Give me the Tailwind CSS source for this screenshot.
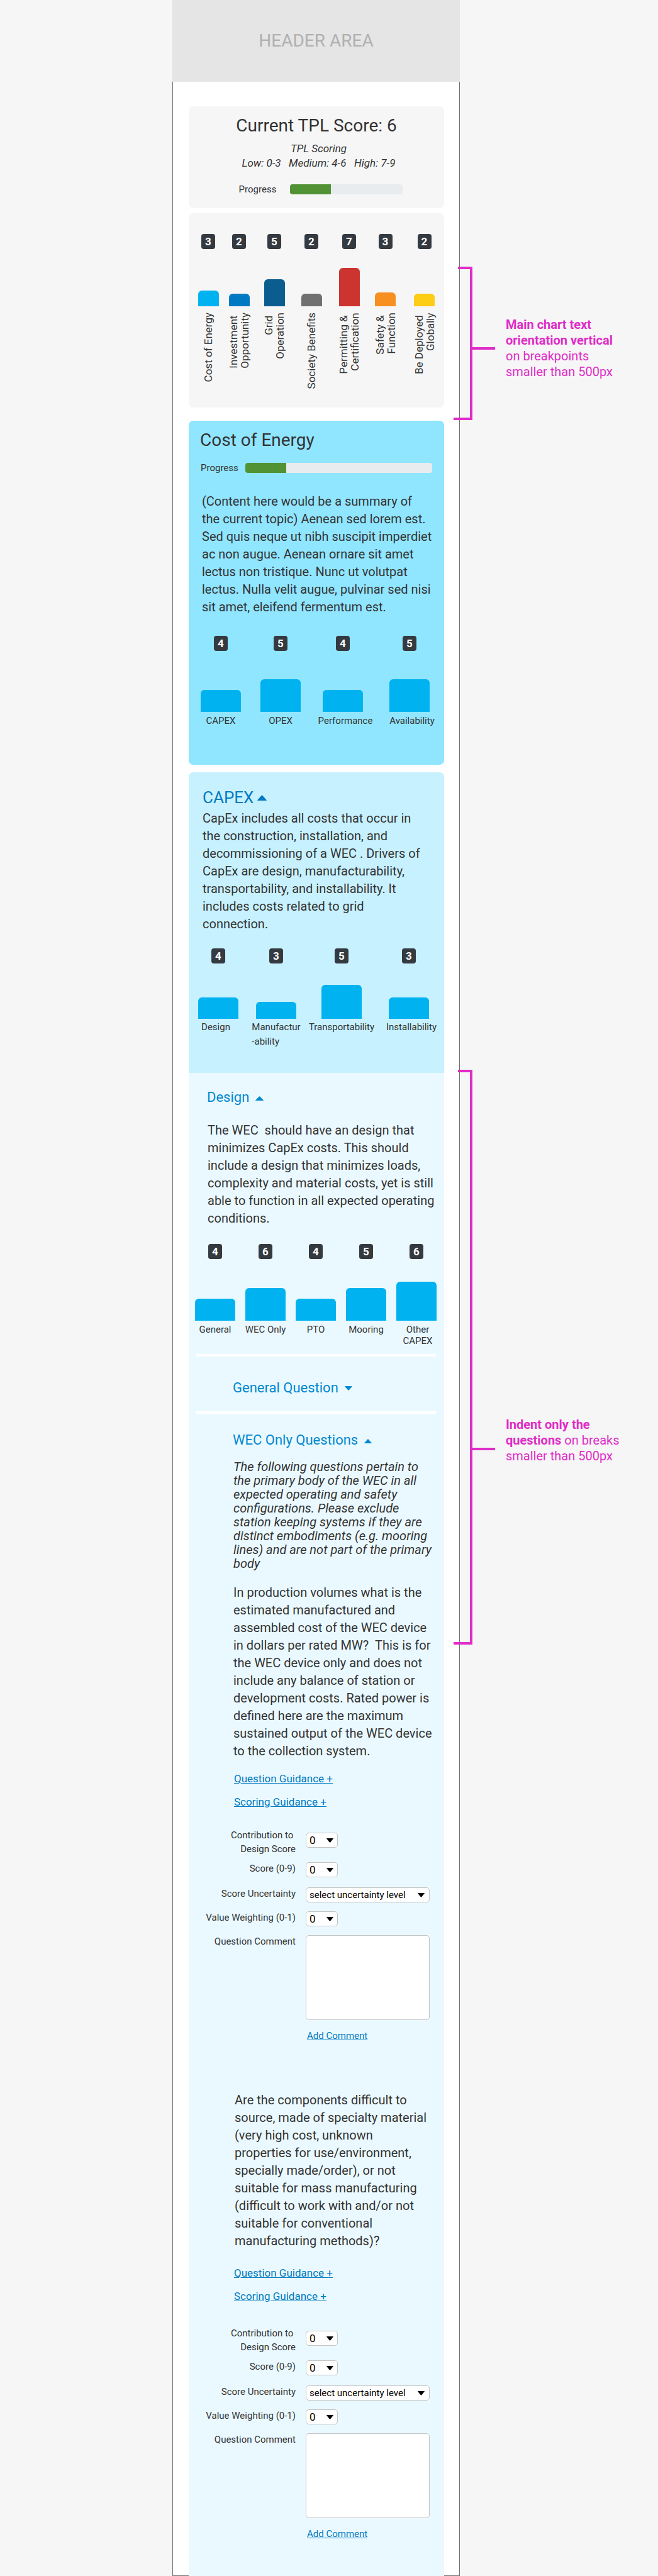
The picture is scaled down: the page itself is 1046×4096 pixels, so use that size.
<!DOCTYPE html>
<html lang="en">
<head>
<meta charset="utf-8">
<meta name="viewport" content="width=device-width, initial-scale=1">
<title>TPL Scoring</title>
<script src="https://cdn.jsdelivr.net/npm/@tailwindcss/browser@4"></script>
</head>
<body class="bg-[#f6f6f6] font-[Roboto,sans-serif] text-[#333]">
<div class="grid grid-cols-[274fr_457fr_315fr]">

  <div class="col-start-2 min-w-0">
    <header class="flex h-[130px] items-center justify-center bg-[#e5e5e5] text-[28px] leading-10 text-[#b0b0b0]">HEADER AREA</header>

    <main class="border-x border-b border-[#707070] bg-white pt-[39px] pr-6 pl-[25px]">

      <!-- Overall score -->
      <section class="rounded-[7px] bg-[#f6f6f6] pt-[13px] pb-[22px] text-center">
        <h1 class="text-[28px] leading-9">Current TPL Score: 6</h1>
        <p class="mt-[7px] pl-[7px] text-[17px] leading-[23px] italic">TPL Scoring<br>Low: 0-3 &nbsp; Medium: 4-6 &nbsp; High: 7-9</p>
        <div class="mt-[22px] flex items-center justify-center gap-[22px] pl-[14px]">
          <span id="p1" class="text-[15px] leading-4">Progress</span>
          <div role="progressbar" aria-labelledby="p1" aria-valuenow="36" class="h-4 w-[179px] overflow-hidden rounded-[4px] bg-[#e8ecef]"><div class="h-full bg-[#519334]" style="width:36%"></div></div>
        </div>
      </section>

      <!-- Main chart -->
      <section class="mt-2 grid grid-cols-[38fr_60fr_52fr_66fr_54fr_61fr_63fr] rounded-[7px] bg-[#f6f6f6] pt-[33px] pb-[30px] pl-3">
        <div class="flex flex-col items-center">
          <span class="w-[22px] rounded bg-[#343a40] text-center text-[17px] leading-6 font-bold text-white">3</span>
          <div class="flex h-[91px] items-end"><div class="w-[33px] rounded-t-md bg-[#00b3f0]" style="height:25px"></div></div>
          <span class="mt-[10px] rotate-180 text-right text-[17px] leading-[18px] whitespace-nowrap [writing-mode:vertical-rl]">Cost of Energy</span>
        </div>
        <div class="flex flex-col items-center">
          <span class="w-[22px] rounded bg-[#343a40] text-center text-[17px] leading-6 font-bold text-white">2</span>
          <div class="flex h-[91px] items-end"><div class="w-[33px] rounded-t-md bg-[#0079c2]" style="height:20px"></div></div>
          <span class="mt-[10px] rotate-180 text-right text-[17px] leading-[18px] whitespace-nowrap [writing-mode:vertical-rl]">Investment&nbsp;<br>Opportunity</span>
        </div>
        <div class="flex flex-col items-center">
          <span class="w-[22px] rounded bg-[#343a40] text-center text-[17px] leading-6 font-bold text-white">5</span>
          <div class="flex h-[91px] items-end"><div class="w-[33px] rounded-t-md bg-[#0c5d8f]" style="height:43px"></div></div>
          <span class="mt-[10px] rotate-180 text-right text-[17px] leading-[18px] whitespace-nowrap [writing-mode:vertical-rl]">Grid&nbsp;<br>Operation</span>
        </div>
        <div class="flex flex-col items-center">
          <span class="w-[22px] rounded bg-[#343a40] text-center text-[17px] leading-6 font-bold text-white">2</span>
          <div class="flex h-[91px] items-end"><div class="w-[33px] rounded-t-md bg-[#707070]" style="height:20px"></div></div>
          <span class="mt-[10px] rotate-180 text-right text-[17px] leading-[18px] whitespace-nowrap [writing-mode:vertical-rl]">Society Benefits</span>
        </div>
        <div class="flex flex-col items-center">
          <span class="w-[22px] rounded bg-[#343a40] text-center text-[17px] leading-6 font-bold text-white">7</span>
          <div class="flex h-[91px] items-end"><div class="w-[33px] rounded-t-md bg-[#cc342f]" style="height:61px"></div></div>
          <span class="mt-[10px] rotate-180 text-right text-[17px] leading-[18px] whitespace-nowrap [writing-mode:vertical-rl]">Permitting &amp;&nbsp;<br>Certification</span>
        </div>
        <div class="flex flex-col items-center">
          <span class="w-[22px] rounded bg-[#343a40] text-center text-[17px] leading-6 font-bold text-white">3</span>
          <div class="flex h-[91px] items-end"><div class="w-[33px] rounded-t-md bg-[#f79020]" style="height:22px"></div></div>
          <span class="mt-[10px] rotate-180 text-right text-[17px] leading-[18px] whitespace-nowrap [writing-mode:vertical-rl]">Safety &amp;&nbsp;<br>Function</span>
        </div>
        <div class="flex flex-col items-center">
          <span class="w-[22px] rounded bg-[#343a40] text-center text-[17px] leading-6 font-bold text-white">2</span>
          <div class="flex h-[91px] items-end"><div class="w-[33px] rounded-t-md bg-[#fdcd15]" style="height:20px"></div></div>
          <span class="mt-[10px] rotate-180 text-right text-[17px] leading-[18px] whitespace-nowrap [writing-mode:vertical-rl]">Be Deployed&nbsp;<br>Globally</span>
        </div>
      </section>

      <!-- Cost of Energy -->
      <section class="mt-[21px] rounded-[7px] bg-[#90e5ff] pt-[13px] pb-[61px]">
        <h2 class="pl-[18px] text-[28px] leading-9">Cost of Energy</h2>
        <div class="mt-[18px] flex items-center gap-[11px] px-[19px]">
          <span id="p2" class="text-[15px] leading-4">Progress</span>
          <div role="progressbar" aria-labelledby="p2" aria-valuenow="22" class="h-4 flex-1 overflow-hidden rounded-[4px] bg-[#e8ecef]"><div class="h-full bg-[#519334]" style="width:22%"></div></div>
        </div>
        <p class="mt-[31px] pl-[21px] text-[20px] leading-7">(Content here would be a summary of<br>the current topic) Aenean sed lorem est.<br>Sed quis neque ut nibh suscipit imperdiet<br>ac non augue. Aenean ornare sit amet<br>lectus non tristique. Nunc ut volutpat<br>lectus. Nulla velit augue, pulvinar sed nisi<br>sit amet, eleifend fermentum est.</p>
        <div class="mt-8 grid grid-cols-[98fr_92fr_106fr_106fr] px-0.5">
          <div class="flex flex-col items-center">
            <span class="w-[22px] rounded bg-[#343a40] text-center text-[17px] leading-6 font-bold text-white">4</span>
            <div class="flex h-[97px] items-end"><div class="w-16 rounded-t-md bg-[#00b3f0]" style="height:35px"></div></div>
            <span class="mt-[5px] text-[15px] leading-[18px]">CAPEX</span>
          </div>
          <div class="flex flex-col items-center">
            <span class="w-[22px] rounded bg-[#343a40] text-center text-[17px] leading-6 font-bold text-white">5</span>
            <div class="flex h-[97px] items-end"><div class="w-16 rounded-t-md bg-[#00b3f0]" style="height:52px"></div></div>
            <span class="mt-[5px] text-[15px] leading-[18px]">OPEX</span>
          </div>
          <div class="flex flex-col items-center">
            <span class="w-[22px] rounded bg-[#343a40] text-center text-[17px] leading-6 font-bold text-white">4</span>
            <div class="flex h-[97px] items-end"><div class="w-16 rounded-t-md bg-[#00b3f0]" style="height:35px"></div></div>
            <span class="mt-[5px] pl-2 text-[15px] leading-[18px]">Performance</span>
          </div>
          <div class="flex flex-col items-center">
            <span class="w-[22px] rounded bg-[#343a40] text-center text-[17px] leading-6 font-bold text-white">5</span>
            <div class="flex h-[97px] items-end"><div class="w-16 rounded-t-md bg-[#00b3f0]" style="height:52px"></div></div>
            <span class="mt-[5px] pl-2 text-[15px] leading-[18px]">Availability</span>
          </div>
        </div>
      </section>

      <!-- CAPEX -->
      <section class="mt-3 rounded-t-[7px] bg-[#c7f1ff] pt-6 pb-[38px]">
        <h2 class="pl-[22px] text-[26px] leading-8 text-[#007ac2]"><button type="button" aria-expanded="true" class="flex items-center gap-1.5">CAPEX
          <svg class="h-[9px] w-[15px]" viewBox="0 0 15 9" fill="currentColor" aria-hidden="true"><path d="M1 9h13q1.600 0 .6-1.100L8.200.8q-.7-.7-1.400 0L.4 7.900Q-.6 9 1 9z"/></svg></button></h2>
        <p class="mt-[3px] pl-[22px] text-[20px] leading-7">CapEx includes all costs that occur in<br>the construction, installation, and<br>decommissioning of a WEC . Drivers of<br>CapEx are design, manufacturability,<br>transportability, and installability. It<br>includes costs related to grid<br>connection.</p>
        <div class="mt-[25px] grid grid-cols-[94fr_90fr_118fr_96fr] pr-2">
          <div class="flex flex-col items-center">
            <span class="w-[22px] rounded bg-[#343a40] text-center text-[17px] leading-6 font-bold text-white">4</span>
            <div class="flex h-[88px] items-end"><div class="w-16 rounded-t-md bg-[#00b3f0]" style="height:34px"></div></div>
            <span class="mt-0.5 pr-2 text-[15px] leading-[23px]">Design</span>
          </div>
          <div class="flex flex-col items-center">
            <span class="w-[22px] rounded bg-[#343a40] text-center text-[17px] leading-6 font-bold text-white">3</span>
            <div class="flex h-[88px] items-end"><div class="w-16 rounded-t-md bg-[#00b3f0]" style="height:27px"></div></div>
            <span class="mt-0.5 text-[15px] leading-[23px]">Manufactur<br>-ability</span>
          </div>
          <div class="flex flex-col items-center">
            <span class="w-[22px] rounded bg-[#343a40] text-center text-[17px] leading-6 font-bold text-white">5</span>
            <div class="flex h-[88px] items-end"><div class="w-16 rounded-t-md bg-[#00b3f0]" style="height:54px"></div></div>
            <span class="mt-0.5 text-[15px] leading-[23px]">Transportability</span>
          </div>
          <div class="flex flex-col items-center">
            <span class="w-[22px] rounded bg-[#343a40] text-center text-[17px] leading-6 font-bold text-white">3</span>
            <div class="flex h-[88px] items-end"><div class="w-16 rounded-t-md bg-[#00b3f0]" style="height:34px"></div></div>
            <span class="mt-0.5 pl-2 text-[15px] leading-[23px]">Installability</span>
          </div>
        </div>
      </section>

      <!-- Design -->
      <section class="-mb-px bg-[#eaf9ff] pt-[25px] pb-[57px]">
        <h3 class="pl-[29px] text-[22px] leading-7 text-[#0088d0]"><button type="button" aria-expanded="true" class="flex items-center gap-[10px]">Design
          <svg class="mt-0.5 h-[7px] w-[13px]" viewBox="0 0 15 9" preserveAspectRatio="none" fill="currentColor" aria-hidden="true"><path d="M1 9h13q1.600 0 .6-1.100L8.200.8q-.7-.7-1.400 0L.4 7.900Q-.6 9 1 9z"/></svg></button></h3>
        <p class="mt-6 pl-[30px] text-[20px] leading-7">The WEC &nbsp;should have an design that<br>minimizes CapEx costs. This should<br>include a design that minimizes loads,<br>complexity and material costs, yet is still<br>able to function in all expected operating<br>conditions.</p>
        <div class="mt-[27px] grid grid-cols-5 pr-1 pl-0.5 text-center">
          <div class="flex flex-col items-center">
            <span class="w-[22px] rounded bg-[#343a40] text-[17px] leading-6 font-bold text-white">4</span>
            <div class="flex h-[98px] items-end"><div class="w-16 rounded-t-md bg-[#00b3f0]" style="height:35px"></div></div>
            <span class="mt-[5px] text-[15px] leading-[18px]">General</span>
          </div>
          <div class="flex flex-col items-center">
            <span class="w-[22px] rounded bg-[#343a40] text-[17px] leading-6 font-bold text-white">6</span>
            <div class="flex h-[98px] items-end"><div class="w-16 rounded-t-md bg-[#00b3f0]" style="height:52px"></div></div>
            <span class="mt-[5px] text-[15px] leading-[18px]">WEC Only</span>
          </div>
          <div class="flex flex-col items-center">
            <span class="w-[22px] rounded bg-[#343a40] text-[17px] leading-6 font-bold text-white">4</span>
            <div class="flex h-[98px] items-end"><div class="w-16 rounded-t-md bg-[#00b3f0]" style="height:35px"></div></div>
            <span class="mt-[5px] text-[15px] leading-[18px]">PTO</span>
          </div>
          <div class="flex flex-col items-center">
            <span class="w-[22px] rounded bg-[#343a40] text-[17px] leading-6 font-bold text-white">5</span>
            <div class="flex h-[98px] items-end"><div class="w-16 rounded-t-md bg-[#00b3f0]" style="height:52px"></div></div>
            <span class="mt-[5px] text-[15px] leading-[18px]">Mooring</span>
          </div>
          <div class="flex flex-col items-center">
            <span class="w-[22px] rounded bg-[#343a40] text-[17px] leading-6 font-bold text-white">6</span>
            <div class="flex h-[98px] items-end"><div class="w-16 rounded-t-md bg-[#00b3f0]" style="height:62px"></div></div>
            <span class="mt-[5px] pl-1 text-[15px] leading-[18px]">Other<br>CAPEX</span>
          </div>
        </div>

        <hr class="mt-3 mr-[13px] ml-[11px] h-1 border-0 bg-white">

        <h4 class="mt-9 pl-[70px] text-[22px] leading-7 text-[#0088d0]"><button type="button" aria-expanded="false" class="flex items-center gap-[10px]">General Question
          <svg class="h-[7px] w-3" viewBox="0 0 15 9" preserveAspectRatio="none" fill="currentColor" aria-hidden="true"><path d="M1 0h13q1.600 0 .6 1.100L8.200 8.200q-.7.700-1.400 0L.4 1.100Q-.6 0 1 0z"/></svg></button></h4>

        <hr class="mt-[23px] mr-[13px] ml-[11px] h-1 border-0 bg-white">

        <h4 class="mt-7 pl-[70px] text-[22px] leading-7 text-[#0088d0]"><button type="button" aria-expanded="true" class="flex items-center gap-[10px]">WEC Only Questions
          <svg class="mt-0.5 h-[7px] w-3" viewBox="0 0 15 9" preserveAspectRatio="none" fill="currentColor" aria-hidden="true"><path d="M1 9h13q1.600 0 .6-1.100L8.200.8q-.7-.7-1.400 0L.4 7.900Q-.6 9 1 9z"/></svg></button></h4>
        <p class="mt-[17px] pl-[71px] text-[20px] leading-[22px] italic">The following questions pertain to<br>the primary body of the WEC in all<br>expected operating and safety<br>configurations. Please exclude<br>station keeping systems if they are<br>distinct embodiments (e.g. mooring<br>lines) and are not part of the primary<br>body</p>

        <!-- Question 1 -->
        <p class="mt-[21px] pl-[71px] text-[20px] leading-7">In production volumes what is the<br>estimated manufactured and<br>assembled cost of the WEC device<br>in dollars per rated MW? &nbsp;This is for<br>the WEC device only and does not<br>include any balance of station or<br>development costs. Rated power is<br>defined here are the maximum<br>sustained output of the WEC device<br>to the collection system.</p>
        <div class="mt-5 flex flex-col items-start gap-[17px] pl-[72px] text-[17px] leading-5 text-[#007ac2] underline">
          <a href="#qg1">Question Guidance +</a>
          <a href="#sg1">Scoring Guidance +</a>
        </div>
        <form class="mt-8 grid grid-cols-[170px_1fr] gap-x-4 pr-[23px] text-[15px] leading-5">
          <label for="contrib1" class="text-right leading-[22px]">Contribution to&nbsp;<br>Design Score</label>
          <div class="relative mt-[7px] h-6 w-[51px]">
            <select id="contrib1" class="h-6 w-full appearance-none rounded-[5px] border border-[#c4c4c4] bg-white pl-[5px] text-[17px] leading-5 text-black"><option>0</option></select>
            <svg class="pointer-events-none absolute top-[9px] right-[7px] h-[7px] w-[11px]" viewBox="0 0 15 9" preserveAspectRatio="none" aria-hidden="true"><path d="M1 0h13q1.600 0 .6 1.100L8.200 8.200q-.7.700-1.400 0L.4 1.100Q-.6 0 1 0z"/></svg>
          </div>
          <label for="score1" class="mt-[10px] text-right">Score (0-9)</label>
          <div class="relative mt-[10px] h-6 w-[51px]">
            <select id="score1" class="h-6 w-full appearance-none rounded-[5px] border border-[#c4c4c4] bg-white pl-[5px] text-[17px] leading-5 text-black"><option>0</option></select>
            <svg class="pointer-events-none absolute top-[9px] right-[7px] h-[7px] w-[11px]" viewBox="0 0 15 9" preserveAspectRatio="none" aria-hidden="true"><path d="M1 0h13q1.600 0 .6 1.100L8.200 8.200q-.7.700-1.400 0L.4 1.100Q-.6 0 1 0z"/></svg>
          </div>
          <label for="unc1" class="mt-4 text-right">Score Uncertainty</label>
          <div class="relative mt-4 h-6">
            <select id="unc1" class="h-6 w-full appearance-none rounded-[5px] border border-[#c4c4c4] bg-white pl-[5px] text-[15px] leading-5 text-black"><option>select uncertainty level</option></select>
            <svg class="pointer-events-none absolute top-[9px] right-2 h-[7px] w-[11px]" viewBox="0 0 15 9" preserveAspectRatio="none" aria-hidden="true"><path d="M1 0h13q1.600 0 .6 1.100L8.200 8.200q-.7.700-1.400 0L.4 1.100Q-.6 0 1 0z"/></svg>
          </div>
          <label for="weight1" class="mt-[14px] text-right">Value Weighting (0-1)</label>
          <div class="relative mt-[14px] h-6 w-[51px]">
            <select id="weight1" class="h-6 w-full appearance-none rounded-[5px] border border-[#c4c4c4] bg-white pl-[5px] text-[17px] leading-5 text-black"><option>0</option></select>
            <svg class="pointer-events-none absolute top-[9px] right-[7px] h-[7px] w-[11px]" viewBox="0 0 15 9" preserveAspectRatio="none" aria-hidden="true"><path d="M1 0h13q1.600 0 .6 1.100L8.200 8.200q-.7.700-1.400 0L.4 1.100Q-.6 0 1 0z"/></svg>
          </div>
          <label for="comment1" class="mt-[14px] text-right">Question Comment</label>
          <textarea id="comment1" class="mt-[14px] block h-[135px] w-full resize-none rounded-[5px] border border-[#c4c4c4] bg-white p-1.5"></textarea>
          <a href="#add1" class="col-start-2 mt-[15px] ml-0.5 justify-self-start text-[#007ac2] underline">Add Comment</a>
        </form>

        <!-- Question 2 -->
        <p class="mt-[78px] pl-[73px] text-[20px] leading-7">Are the components difficult to<br>source, made of specialty material<br>(very high cost, unknown<br>properties for use/environment,<br>specially made/order), or not<br>suitable for mass manufacturing<br>(difficult to work with and/or not<br>suitable for conventional<br>manufacturing methods)?</p>
        <div class="mt-[27px] flex flex-col items-start gap-[17px] pl-[72px] text-[17px] leading-5 text-[#007ac2] underline">
          <a href="#qg2">Question Guidance +</a>
          <a href="#sg2">Scoring Guidance +</a>
        </div>
        <form class="mt-[38px] grid grid-cols-[170px_1fr] gap-x-4 pr-[23px] text-[15px] leading-5">
          <label for="contrib2" class="text-right leading-[22px]">Contribution to&nbsp;<br>Design Score</label>
          <div class="relative mt-[7px] h-6 w-[51px]">
            <select id="contrib2" class="h-6 w-full appearance-none rounded-[5px] border border-[#c4c4c4] bg-white pl-[5px] text-[17px] leading-5 text-black"><option>0</option></select>
            <svg class="pointer-events-none absolute top-[9px] right-[7px] h-[7px] w-[11px]" viewBox="0 0 15 9" preserveAspectRatio="none" aria-hidden="true"><path d="M1 0h13q1.600 0 .6 1.100L8.200 8.200q-.7.700-1.400 0L.4 1.100Q-.6 0 1 0z"/></svg>
          </div>
          <label for="score2" class="mt-[10px] text-right">Score (0-9)</label>
          <div class="relative mt-[10px] h-6 w-[51px]">
            <select id="score2" class="h-6 w-full appearance-none rounded-[5px] border border-[#c4c4c4] bg-white pl-[5px] text-[17px] leading-5 text-black"><option>0</option></select>
            <svg class="pointer-events-none absolute top-[9px] right-[7px] h-[7px] w-[11px]" viewBox="0 0 15 9" preserveAspectRatio="none" aria-hidden="true"><path d="M1 0h13q1.600 0 .6 1.100L8.200 8.200q-.7.700-1.400 0L.4 1.100Q-.6 0 1 0z"/></svg>
          </div>
          <label for="unc2" class="mt-4 text-right">Score Uncertainty</label>
          <div class="relative mt-4 h-6">
            <select id="unc2" class="h-6 w-full appearance-none rounded-[5px] border border-[#c4c4c4] bg-white pl-[5px] text-[15px] leading-5 text-black"><option>select uncertainty level</option></select>
            <svg class="pointer-events-none absolute top-[9px] right-2 h-[7px] w-[11px]" viewBox="0 0 15 9" preserveAspectRatio="none" aria-hidden="true"><path d="M1 0h13q1.600 0 .6 1.100L8.200 8.200q-.7.700-1.400 0L.4 1.100Q-.6 0 1 0z"/></svg>
          </div>
          <label for="weight2" class="mt-[14px] text-right">Value Weighting (0-1)</label>
          <div class="relative mt-[14px] h-6 w-[51px]">
            <select id="weight2" class="h-6 w-full appearance-none rounded-[5px] border border-[#c4c4c4] bg-white pl-[5px] text-[17px] leading-5 text-black"><option>0</option></select>
            <svg class="pointer-events-none absolute top-[9px] right-[7px] h-[7px] w-[11px]" viewBox="0 0 15 9" preserveAspectRatio="none" aria-hidden="true"><path d="M1 0h13q1.600 0 .6 1.100L8.200 8.200q-.7.700-1.400 0L.4 1.100Q-.6 0 1 0z"/></svg>
          </div>
          <label for="comment2" class="mt-[14px] text-right">Question Comment</label>
          <textarea id="comment2" class="mt-[14px] block h-[135px] w-full resize-none rounded-[5px] border border-[#c4c4c4] bg-white p-1.5"></textarea>
          <a href="#add2" class="col-start-2 mt-[15px] ml-0.5 justify-self-start text-[#007ac2] underline">Add Comment</a>
        </form>
      </section>
    </main>
  </div>

  <!-- Design notes beside the frame; the brackets reach over its edge -->
  <aside class="relative z-10 -ml-[10px] pt-[424px] text-[20px] leading-[25px] text-[#e02cc8]">
    <div class="flex h-[244px] items-start">
      <div class="flex h-full w-[30px] shrink-0 flex-col items-end">
        <div class="h-1 w-[23px] bg-[#e02cc8]"></div>
        <div class="w-1 flex-1 bg-[#e02cc8]"></div>
        <div class="h-1 w-full bg-[#e02cc8]"></div>
      </div>
      <div class="mt-32 h-1 w-9 shrink-0 bg-[#e02cc8]"></div>
      <p class="mt-20 ml-[17px]"><strong class="font-bold">Main chart text<br>orientation vertical</strong><br>on breakpoints<br>smaller than 500px</p>
    </div>
    <div class="mt-[1033px] flex h-[914px] items-start">
      <div class="flex h-full w-[30px] shrink-0 flex-col items-end">
        <div class="h-1 w-[23px] bg-[#e02cc8]"></div>
        <div class="w-1 flex-1 bg-[#e02cc8]"></div>
        <div class="h-1 w-full bg-[#e02cc8]"></div>
      </div>
      <div class="mt-[601px] h-1 w-9 shrink-0 bg-[#e02cc8]"></div>
      <p class="mt-[552px] ml-[17px]"><strong class="font-bold">Indent only the<br>questions</strong> on breaks<br>smaller than 500px</p>
    </div>
  </aside>
</div>
</body>
</html>
